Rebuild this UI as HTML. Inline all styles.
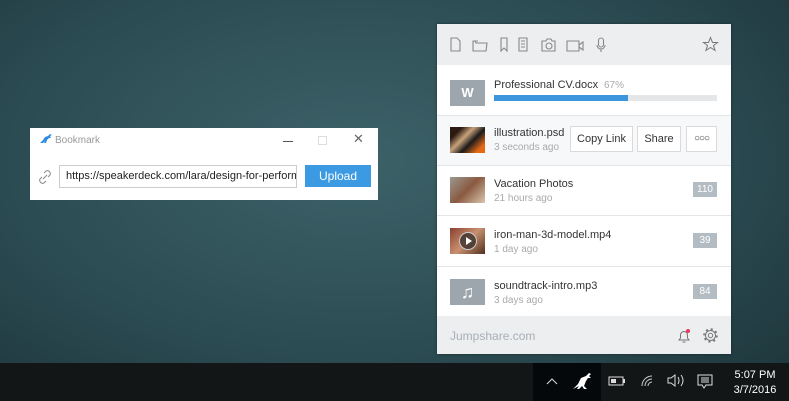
<!DOCTYPE html>
<html><head><meta charset="utf-8"><style>
*{margin:0;padding:0;box-sizing:border-box}
body{width:789px;height:401px;overflow:hidden;font-family:"Liberation Sans",sans-serif;background:radial-gradient(ellipse at 45% 40%,#3c6268 0%,#2c4c53 55%,#1c3439 100%);position:relative}
.abs{position:absolute}
#panel{left:437px;top:24px;width:294px;height:330px;background:#fff;box-shadow:0 0 3px rgba(0,0,0,.4)}
.hdr{left:0;top:0;width:294px;height:41px;background:#eceef0}
.row{left:0;width:294px;height:50px;border-top:1px solid #e3e5e7}
.thumb{left:13px;width:35px;height:26px}
.nm{left:57px;font-size:11px;color:#333}
.tm{left:57px;font-size:10px;color:#aaa}
.cnt{right:14px;width:24px;height:15px;background:#b4bcc3;color:#fff;font-size:10px;text-align:center;line-height:15px}
.btn{height:26px;border:1px solid #d8dadc;background:#fff;font-size:11px;color:#333;text-align:center;line-height:24px;top:11px}
svg{position:absolute}
</style></head><body>
<div class="abs" style="left:0;top:363px;width:789px;height:38px;background:#121617"></div>
<div class="abs" style="left:533px;top:363px;width:68px;height:38px;background:#05080a"></div>
<div class="abs" style="left:732px;top:368px;width:46px;color:#fff;font-size:11px;text-align:center;line-height:15px">5:07 PM<br>3/7/2016</div>
<svg style="left:545px;top:376px" width="14" height="10"><path d="M2 8L7 3L12 8" stroke="#ddd" fill="none"/></svg>
<svg style="left:572px;top:372px" width="22" height="18"><path d="M1 17l5-5 3-6 5-2 3-3 2 1-2 2 2 2-3 0-2 3-2 5 3 3h-3l-2-3-3 3h-2l2-3z" fill="#fff"/></svg>
<svg style="left:608px;top:376px" width="18" height="10"><rect x="1" y="1" width="14" height="8" stroke="#ddd" fill="none"/><rect x="3" y="3" width="5" height="4" fill="#ddd"/><rect x="15" y="3" width="2" height="4" fill="#ddd"/></svg>
<svg style="left:640px;top:374px" width="14" height="13"><path d="M2 12A10 10 0 0 1 12 2M5 12A7 7 0 0 1 12 5M8 12A4 4 0 0 1 12 8" stroke="#ccc" fill="none"/></svg>
<svg style="left:667px;top:374px" width="18" height="13"><path d="M1 4h3l4-3v11l-4-3H1z" stroke="#ddd" fill="none"/><path d="M11 3q2 3.5 0 7M14 1q4 5.5 0 11" stroke="#ddd" fill="none"/></svg>
<svg style="left:697px;top:374px" width="16" height="15"><path d="M1 1h14v10H9l-2 3-2-3H1z" stroke="#ddd" fill="none"/><path d="M4 4h8M4 6h8M4 8h8" stroke="#ddd"/></svg>

<div class="abs" style="left:30px;top:128px;width:348px;height:72px;background:#fff">
 <svg style="left:9px;top:6px" width="14" height="10"><path d="M1 9l3-3 2-3 3-1 2-2 2 1-2 1 1 2h-2l-2 2-1 3h-2l1-2-2 2z" fill="#2e8be0"/></svg>
 <div class="abs" style="left:25px;top:7px;font-size:10px;color:#999">Bookmark</div>
 <div class="abs" style="left:253px;top:13px;width:10px;height:1px;background:#555"></div>
 <div class="abs" style="left:288px;top:8px;width:9px;height:9px;border:1px solid #ddd"></div>
 <div class="abs" style="left:323px;top:3px;font-size:13px;color:#666">✕</div>
 <svg style="left:8px;top:42px" width="14" height="14"><path d="M6 3l2-2a3 3 0 0 1 4 4l-2 2M8 11l-2 2a3 3 0 0 1-4-4l2-2M5 9l4-4" stroke="#888" fill="none"/></svg>
 <div class="abs" style="left:29px;top:37px;width:238px;height:23px;border:1px solid #ccc;font-size:11px;line-height:21px;padding-left:6px;color:#222;white-space:nowrap;overflow:hidden">https://speakerdeck.com/lara/design-for-perform</div>
 <div class="abs" style="left:275px;top:37px;width:66px;height:22px;background:#3b9ae1;color:#fff;font-size:12px;text-align:center;line-height:22px">Upload</div>
</div>

<div class="abs" id="panel">
 <div class="abs hdr"></div>
 <svg style="left:12px;top:13px" width="180" height="16" fill="none" stroke="#888" stroke-width="1.1">
  <path d="M2 1h6l3 3v10H2z"/>
  <path d="M24 4v10h13l1-8H27l-1-2zM24 4h5"/>
  <path d="M52 1h6v13l-3-3-3 3z"/>
  <path d="M70 1h8v13h-8zM72 4h4M72 7h4M72 10h4"/>
  <path d="M93 4h4l1-2h4l1 2h3v10H93z"/><circle cx="100" cy="9" r="3"/>
  <path d="M118 4h12v10h-12zM130 8l4-3v8l-4-3"/>
  <path d="M152 1a2.5 2.5 0 0 1 2.5 2.5v4a2.5 2.5 0 0 1-5 0v-4A2.5 2.5 0 0 1 152 1zM148 8a4 4 0 0 0 8 0M152 12v3"/>
 </svg>
 <svg style="left:265px;top:12px" width="17" height="17"><path d="M8.5 1.5l2 5h5l-4 3 1.6 5-4.6-3-4.6 3 1.6-5-4-3h5z" stroke="#777" fill="none"/></svg>
 <div class="abs row" style="top:41px;border-top:none"></div>
 <div class="abs" style="left:13px;top:56px;width:35px;height:26px;background:#9ea6ad;color:#fff;font-weight:bold;font-size:13px;text-align:center;line-height:26px">W</div>
 <div class="abs nm" style="top:55px">Professional CV.docx <span style="color:#aaa;font-size:10px">&nbsp;67%</span></div>
 <div class="abs" style="left:57px;top:71px;width:223px;height:6px;background:#e5e6e8"><div style="width:134px;height:6px;background:#3d96dc"></div></div>
 <div class="abs row" style="top:91px;background:#f7f8f9"></div>
 <div class="abs thumb" style="top:103px;background:linear-gradient(135deg,#2a1a12 20%,#c9a27a 40%,#1a1a1a 60%,#e56a18 85%)"></div>
 <div class="abs nm" style="top:103px">illustration.psd</div>
 <div class="abs tm" style="top:118px">3 seconds ago</div>
 <div class="abs btn" style="left:133px;top:102px;width:63px">Copy Link</div>
 <div class="abs btn" style="left:200px;top:102px;width:44px">Share</div>
 <div class="abs btn" style="left:249px;top:102px;width:31px;font-size:10px;letter-spacing:-1px">○○○</div>
 <div class="abs row" style="top:141px"></div>
 <div class="abs thumb" style="top:153px;background:linear-gradient(135deg,#9a9890,#8a5a40 50%,#d8c8b0)"></div>
 <div class="abs nm" style="top:154px">Vacation Photos</div>
 <div class="abs tm" style="top:169px">21 hours ago</div>
 <div class="abs cnt" style="top:158px">110</div>
 <div class="abs row" style="top:191px"></div>
 <div class="abs thumb" style="top:204px;background:linear-gradient(135deg,#8a4030,#c89070 50%,#503020)"></div>
 <div class="abs" style="left:22px;top:208px;width:18px;height:18px;border-radius:50%;background:rgba(60,50,45,.8);border:1px solid #ccc"></div>
 <div class="abs" style="left:29px;top:213px;width:0;height:0;border-left:6px solid #fff;border-top:4px solid transparent;border-bottom:4px solid transparent"></div>
 <div class="abs nm" style="top:205px">iron-man-3d-model.mp4</div>
 <div class="abs tm" style="top:220px">1 day ago</div>
 <div class="abs cnt" style="top:209px">39</div>
 <div class="abs row" style="top:242px"></div>
 <div class="abs thumb" style="top:255px;background:#9ea6ad;color:#fff;font-size:18px;text-align:center;line-height:26px">♫</div>
 <div class="abs nm" style="top:256px">soundtrack-intro.mp3</div>
 <div class="abs tm" style="top:271px">3 days ago</div>
 <div class="abs cnt" style="top:260px">84</div>
 <div class="abs" style="left:0;top:292px;width:294px;height:38px;background:#eceef0"></div>
 <div class="abs" style="left:13px;top:305px;font-size:12px;color:#a8afb5">Jumpshare.com</div>
 <svg style="left:240px;top:304px" width="14" height="16"><path d="M2 12h10l-1.5-2V7a3.5 3.5 0 0 0-7 0v3zM5.5 14h3" stroke="#777" fill="none"/><circle cx="11" cy="3" r="2" fill="#f0365e"/></svg>
 <svg style="left:266px;top:304px" width="15" height="15"><circle cx="7.5" cy="7.5" r="2.2" stroke="#777" fill="none"/><circle cx="7.5" cy="7.5" r="5" stroke="#777" fill="none"/><circle cx="7.5" cy="7.5" r="6.3" stroke="#777" stroke-width="2" stroke-dasharray="2 2.95" fill="none"/></svg>
</div>
</body></html>
